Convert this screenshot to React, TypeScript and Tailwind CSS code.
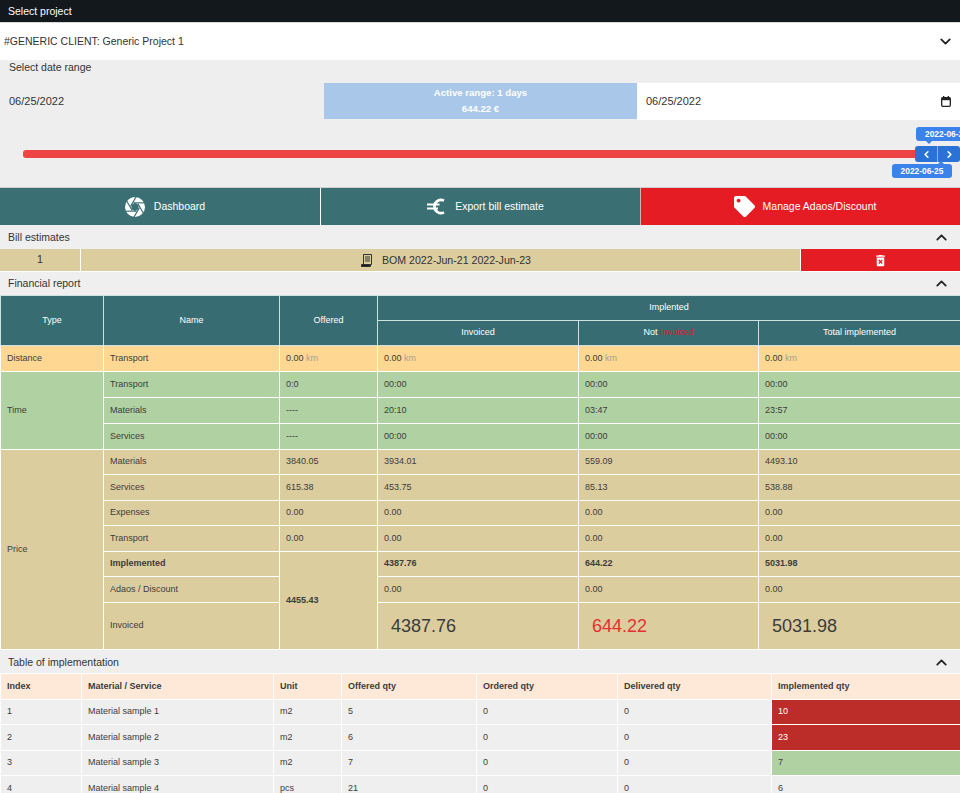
import { ChevronDown, ChevronUp, ChevronLeft, ChevronRight } from "lucide-react";
import { FaTag } from "react-icons/fa";
import { MdDeleteForever } from "react-icons/md";

const td = "border border-white px-[6px] align-middle font-normal";
const th = "border border-[#cfe0e0] font-normal";

function Km({ v }: { v: string }) {
  return (
    <>
      {v} <span className="text-[#a59f92]">km</span>
    </>
  );
}

function SectionHeader({ title, low }: { title: string; low?: boolean }) {
  return (
    <div className={(low ? "pt-[2px] " : "") + "flex h-[23px] items-center justify-between bg-[#efefef] pl-[8px] pr-[10px] text-[10.5px] text-[#333]"}>
      <span>{title}</span>
      <ChevronUp size={17} strokeWidth={2.5} className="text-[#222]" />
    </div>
  );
}

function ApertureIcon() {
  return (
    <svg width="20" height="20" viewBox="0 0 24 24">
      <circle cx="12" cy="12" r="12" fill="#fff" />
      <polygon points="12,7 16.3,9.5 16.3,14.5 12,17 7.7,14.5 7.7,9.5" fill="#3a7074" />
      {[0, 60, 120, 180, 240, 300].map((a) => (
        <line key={a} x1="10" y1="7" x2="24" y2="7" stroke="#3a7074" strokeWidth="1.4" transform={`rotate(${a} 12 12)`} />
      ))}
    </svg>
  );
}

function EuroIcon() {
  return (
    <svg width="18" height="17" viewBox="0 0 18 17" fill="none" stroke="#fff">
      <path d="M17 2.6A6.6 6.6 0 1 0 17 14.4" strokeWidth="2.6" />
      <path d="M0 6.4h12.5M0 10.4h11" strokeWidth="2" />
    </svg>
  );
}

const timeRows = [
  ["Transport", "0:0", "00:00", "00:00", "00:00"],
  ["Materials", "----", "20:10", "03:47", "23:57"],
  ["Services", "----", "00:00", "00:00", "00:00"],
];

const priceRows = [
  ["Materials", "3840.05", "3934.01", "559.09", "4493.10"],
  ["Services", "615.38", "453.75", "85.13", "538.88"],
  ["Expenses", "0.00", "0.00", "0.00", "0.00"],
  ["Transport", "0.00", "0.00", "0.00", "0.00"],
];

const implRows = [
  ["1", "Material sample 1", "m2", "5", "0", "0", "10"],
  ["2", "Material sample 2", "m2", "6", "0", "0", "23"],
  ["3", "Material sample 3", "m2", "7", "0", "0", "7"],
  ["4", "Material sample 4", "pcs", "21", "0", "0", "6"],
];

export default function App() {
  return (
    <div className="h-[793px] w-[960px] overflow-hidden bg-[#efefef] font-['Liberation_Sans',Arial,sans-serif] text-[#333]">
      <div className="flex h-[23px] items-center border-b border-[#d8d8d8] bg-[#13181d] pl-[8px] pt-[1px] text-[10.5px] text-white">
        Select project
      </div>
      <div className="flex h-[37px] items-center justify-between bg-white pl-[4px] pr-[6px] text-[10.5px] text-[#333]">
        <span>#GENERIC CLIENT: Generic Project 1</span>
        <ChevronDown size={17} strokeWidth={2.5} className="text-[#222]" />
      </div>

      {/* date range */}
      <div className="h-[127px] bg-[#eeeeee]">
        <div className="pl-[9px] pt-[1px] text-[10.5px] leading-[12px]">Select date range</div>
        <div className="mt-[10px] flex h-[37px] items-start text-[11px]">
          <div className="flex h-[37px] w-[324px] items-center pl-[9px]">06/25/2022</div>
          <div className="flex h-[36px] w-[313px] flex-col items-center justify-center gap-[4px] bg-[#a9c7e8] text-[9.6px] leading-[12px] text-white">
            <b>Active range: 1 days</b>
            <b className="font-bold">644.22 €</b>
          </div>
          <div className="flex h-[37px] w-[323px] items-center justify-between bg-white pl-[9px] pr-[9px]">
            <span>06/25/2022</span>
            <svg width="10" height="11" viewBox="0 0 10 11" className="text-[#222]">
              <rect x="0.7" y="1.7" width="8.6" height="8.6" rx="1" fill="none" stroke="currentColor" strokeWidth="1.3" />
              <rect x="0.7" y="1.7" width="8.6" height="2.5" fill="currentColor" />
              <rect x="2" y="0" width="1.3" height="2" fill="currentColor" />
              <rect x="6.7" y="0" width="1.3" height="2" fill="currentColor" />
            </svg>
          </div>
        </div>
        <div className="relative mt-[30px] ml-[23px] h-[8px] w-[937px]">
          <div className="h-[8px] rounded-l-[3px] bg-[#ef4444]" />
          <div className="absolute left-[892px] top-[-4px] flex h-[16px] w-[45px] rounded-[3px] bg-[#2b72d6] text-white">
            <div className="flex w-[23px] items-center justify-center border-r border-[#8fb4e8]">
              <ChevronLeft size={11} strokeWidth={3.5} />
            </div>
            <div className="flex w-[22px] items-center justify-center">
              <ChevronRight size={11} strokeWidth={3.5} />
            </div>
          </div>
          <div className="absolute left-[893px] top-[-23px] flex h-[14px] w-[60px] items-center whitespace-nowrap rounded-[3px] bg-[#3b82ea] pl-[9px] text-[8.4px] font-bold text-white">
            2022-06-25
          </div>
          <div className="absolute left-[869px] top-[14px] flex h-[14px] w-[60px] items-center justify-center whitespace-nowrap rounded-[3px] bg-[#3b82ea] text-[8.4px] font-bold text-white">
            2022-06-25
          </div>
          <div className="absolute left-[903px] top-[-9px] size-0 border-x-[3px] border-t-[3px] border-x-transparent border-t-[#3b82ea]" />
          <div className="absolute left-[915px] top-[11px] size-0 border-x-[3px] border-b-[3px] border-x-transparent border-b-[#3b82ea]" />
        </div>
      </div>

      {/* tabs */}
      <div className="flex h-[38px] border-t border-[#cfcfcf] text-[10.5px] text-white">
        <div className="flex w-[321px] items-center justify-center gap-[9px] border-r border-white bg-[#3a7074] pl-[10px]">
          <ApertureIcon />
          <span>Dashboard</span>
        </div>
        <div className="flex w-[319px] items-center justify-center gap-[10px] bg-[#3a7074] pl-[10px]">
          <EuroIcon />
          <span>Export bill estimate</span>
        </div>
        <div className="flex w-[320px] items-center justify-center gap-[8px] border-l border-[#d9b0b0] bg-[#e61c24] pl-[9px]">
          <FaTag size={21} />
          <span>Manage Adaos/Discount</span>
        </div>
      </div>

      <div className="h-[1px]" />
      <SectionHeader title="Bill estimates" />
      <div className="flex h-[23px] border-b border-white bg-[#dccd9f] text-[10.6px]">
        <div className="flex w-[81px] items-center justify-center border-r border-white">1</div>
        <div className="flex w-[719px] items-center justify-center gap-[9px] pl-[11px] pt-[1px]">
          <svg width="12" height="13" viewBox="0 0 12 13" className="text-[#333]">
            <path d="M2.5.5h8v10h-8zM.5 10.5h9v2h-9z" fill="none" stroke="currentColor" />
            <path d="M4 3h5M4 5h5M4 7h5M.5 11h8v1.5h-8z" stroke="currentColor" />
          </svg>
          <span>BOM 2022-Jun-21 2022-Jun-23</span>
        </div>
        <div className="flex flex-1 items-center justify-center border-l border-white bg-[#e61c24] text-white">
          <MdDeleteForever size={15} />
        </div>
      </div>

      <SectionHeader title="Financial report" />

      {/* financial report */}
      <table className="w-[960px] table-fixed border-collapse text-[9px] text-[#3c3c3c]">
        <colgroup>
          <col className="w-[103px]" />
          <col className="w-[176px]" />
          <col className="w-[98px]" />
          <col className="w-[201px]" />
          <col className="w-[180px]" />
          <col className="w-[202px]" />
        </colgroup>
        <thead className="bg-[#376c72] text-white">
          <tr className="h-[25px]">
            <th rowSpan={2} className={th}>Type</th>
            <th rowSpan={2} className={th}>Name</th>
            <th rowSpan={2} className={th}>Offered</th>
            <th colSpan={3} className={th}>Implented</th>
          </tr>
          <tr className="h-[25px]">
            <th className={th}>Invoiced</th>
            <th className={th}>
              Not <span className="text-[#d3232c]">Invoiced</span>
            </th>
            <th className={th}>Total implemented</th>
          </tr>
        </thead>
        <tbody>
          <tr className="h-[26px] bg-[#fed892]">
            <td className={td}>Distance</td>
            <td className={td}>Transport</td>
            <td className={td}><Km v="0.00" /></td>
            <td className={td}><Km v="0.00" /></td>
            <td className={td}><Km v="0.00" /></td>
            <td className={td}><Km v="0.00" /></td>
          </tr>
          {timeRows.map((r, i) => (
            <tr key={r[0]} className="h-[26px] bg-[#b0d2a2]">
              {i === 0 && <td rowSpan={3} className={td}>Time</td>}
              {r.map((c, j) => (
                <td key={j} className={td}>{c}</td>
              ))}
            </tr>
          ))}
          {priceRows.map((r, i) => (
            <tr key={r[0]} className={(i % 2 === 0 ? "h-[25px]" : "h-[26px]") + " bg-[#dccd9f]"}>
              {i === 0 && <td rowSpan={7} className={td}>Price</td>}
              {r.map((c, j) => (
                <td key={j} className={td}>{c}</td>
              ))}
            </tr>
          ))}
          <tr className="h-[25px] bg-[#dccd9f] font-bold">
            <td className={td + " !font-bold"}>Implemented</td>
            <td rowSpan={3} className={td + " !font-bold"}>4455.43</td>
            <td className={td + " !font-bold"}>4387.76</td>
            <td className={td + " !font-bold"}>644.22</td>
            <td className={td + " !font-bold"}>5031.98</td>
          </tr>
          <tr className="h-[26px] bg-[#dccd9f]">
            <td className={td}>Adaos / Discount</td>
            <td className={td}>0.00</td>
            <td className={td}>0.00</td>
            <td className={td}>0.00</td>
          </tr>
          <tr className="h-[47px] bg-[#dccd9f]">
            <td className={td}>Invoiced</td>
            <td className={td + " !pl-[13px] text-[18px]"}>4387.76</td>
            <td className={td + " !pl-[13px] text-[18px] text-[#e53030]"}>644.22</td>
            <td className={td + " !pl-[13px] text-[18px]"}>5031.98</td>
          </tr>
        </tbody>
      </table>

      <SectionHeader title="Table of implementation" low />

      {/* implementation table */}
      <table className="w-[960px] table-fixed border-collapse text-[9px] text-[#3c3c3c]">
        <colgroup>
          <col className="w-[81px]" />
          <col className="w-[192px]" />
          <col className="w-[68px]" />
          <col className="w-[135px]" />
          <col className="w-[141px]" />
          <col className="w-[154px]" />
          <col className="w-[189px]" />
        </colgroup>
        <thead className="bg-[#fee8d8]">
          <tr className="h-[25.5px]">
            {["Index", "Material / Service", "Unit", "Offered qty", "Ordered qty", "Delivered qty", "Implemented qty"].map((h) => (
              <th key={h} className="border border-white px-[6px] text-left font-bold">{h}</th>
            ))}
          </tr>
        </thead>
        <tbody>
          {implRows.map((r, i) => (
            <tr key={r[0]} className="h-[25.6px]">
              {r.map((c, j) => {
                let extra = "";
                if (j === 6 && i < 2) extra = " bg-[#bc2c28] font-bold text-white";
                if (j === 6 && i === 2) extra = " bg-[#b0d2a2]";
                return (
                  <td key={j} className={td + extra}>{c}</td>
                );
              })}
            </tr>
          ))}
        </tbody>
      </table>
    </div>
  );
}
